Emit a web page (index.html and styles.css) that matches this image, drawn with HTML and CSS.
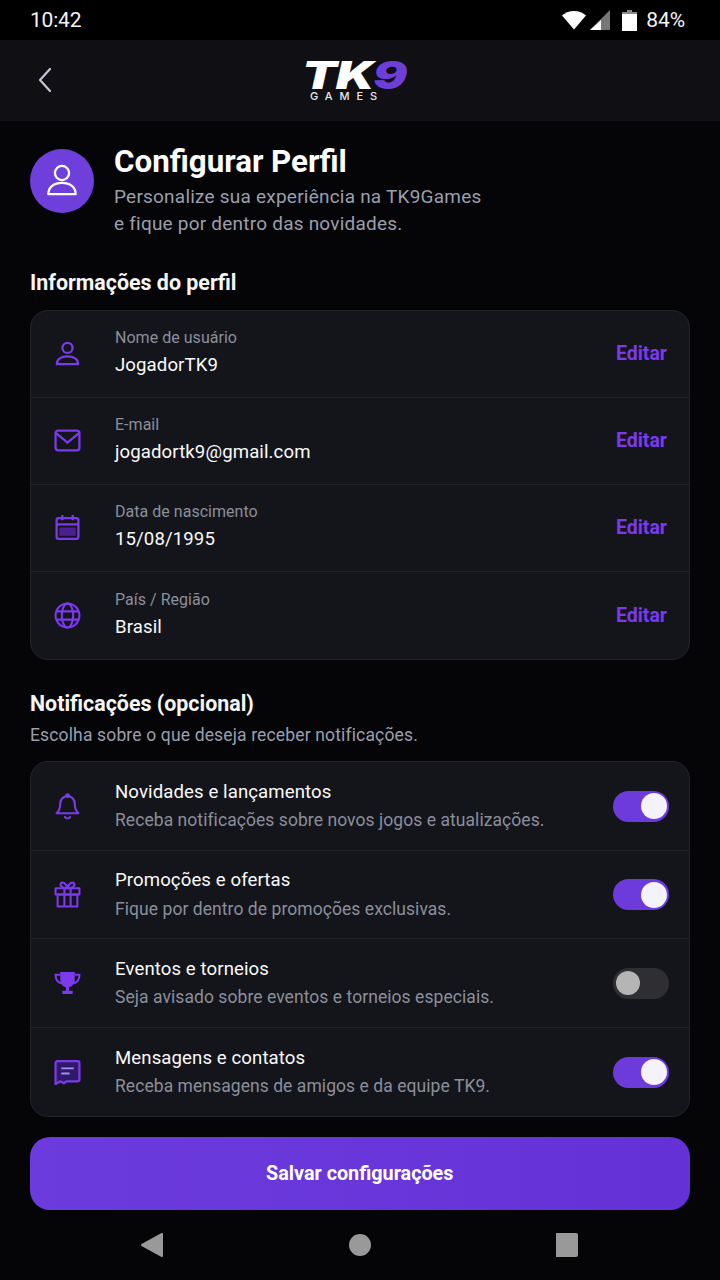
FILE: index.html
```html
<!DOCTYPE html>
<html lang="pt-BR">
<head>
<meta charset="utf-8">
<title>TK9 Games</title>
<link rel="stylesheet" href="styles.css">
</head>
<body>
<div class="phone">
  <div class="status">
    <span class="time">10:42</span>
    <div class="status-right">
      <svg class="s-wifi" width="26" height="20" viewBox="0 0 26 20"><path d="M1 5.500C4 3 8 1 13 1s9 2 12 4.500L13 19.500z" fill="#fff"/></svg>
      <svg class="s-sig" width="21" height="20" viewBox="0 0 21 20"><path d="M20 0v20H0z" fill="#777"/><path d="M11 10v10H0z" fill="#fff"/></svg>
      <svg class="s-bat" width="15" height="21" viewBox="0 0 15 21"><path d="M5 0h5v2h5v19H0V2h5z" fill="#fff"/><path d="M5 0h5v2h5v2H0V2h5z" fill="#888"/></svg>
      <span class="pct">84%</span>
    </div>
  </div>
  <header class="topbar">
    <svg class="back" width="16" height="26" viewBox="0 0 16 26"><path d="M13 2 3 13l10 11" fill="none" stroke="#c4c4d4" stroke-width="2.200" stroke-linecap="round" stroke-linejoin="round"/></svg>
    <div class="logo">
      <div class="logo-main"><span class="logo-tk">TK</span><span class="logo-9">9</span></div>
      <div class="logo-sub">GAMES</div>
    </div>
  </header>
  <main class="content">
    <section class="intro">
      <div class="avatar">
        <svg width="34" height="36" viewBox="0 0 36 38" fill="none" stroke="#fff" stroke-width="2.400"><circle cx="18" cy="10.500" r="7.500"/><path d="M3.500 33c0-7.500 6-12 14.500-12s14.500 4.500 14.500 12z" stroke-linejoin="round"/></svg>
      </div>
      <div>
        <h1 class="title">Configurar Perfil</h1>
        <p class="subtitle">Personalize sua experiência na TK9Games<br>e fique por dentro das novidades.</p>
      </div>
    </section>

    <h2 class="section-title first">Informações do perfil</h2>
    <div class="card">
      <div class="row info-row">
        <svg class="icon" viewBox="0 0 24 24" fill="none" stroke="#7c3aed" stroke-width="2"><circle cx="12" cy="7" r="4.500"/><path d="M2.500 21.500c0-4.500 4-7 9.500-7s9.500 2.500 9.500 7z" stroke-linejoin="round"/></svg>
        <div class="text"><div class="label">Nome de usuário</div><div class="value">JogadorTK9</div></div>
        <span class="edit">Editar</span>
      </div>
      <div class="row info-row">
        <svg class="icon" viewBox="0 0 26 24" fill="none" stroke="#7c3aed" stroke-width="2.200" stroke-linejoin="round"><rect x="1.500" y="2.500" width="23" height="19" rx="2.500"/><path d="m2 5 11 9 11-9"/></svg>
        <div class="text"><div class="label">E-mail</div><div class="value">jogadortk9@gmail.com</div></div>
        <span class="edit">Editar</span>
      </div>
      <div class="row info-row">
        <svg class="icon" viewBox="0 0 24 26" fill="none" stroke="#7c3aed" stroke-width="2.200"><rect x="1.500" y="4" width="21" height="20" rx="2"/><path d="M1.500 10h21M7 1v5M17 1v5"/><rect x="4" y="13" width="16" height="8" fill="#4c1d95" stroke="none"/></svg>
        <div class="text"><div class="label">Data de nascimento</div><div class="value">15/08/1995</div></div>
        <span class="edit">Editar</span>
      </div>
      <div class="row info-row">
        <svg class="icon" viewBox="0 0 26 26" fill="none" stroke="#7c3aed" stroke-width="2"><circle cx="13" cy="13" r="11.500"/><ellipse cx="13" cy="13" rx="5.500" ry="11.500"/><path d="M2.500 9h21M2.500 17h21"/></svg>
        <div class="text"><div class="label">País / Região</div><div class="value">Brasil</div></div>
        <span class="edit">Editar</span>
      </div>
    </div>

    <h2 class="section-title second">Notificações (opcional)</h2>
    <p class="hint">Escolha sobre o que deseja receber notificações.</p>
    <div class="card">
      <div class="row notif-row">
        <svg class="icon" viewBox="0 0 24 26" fill="none" stroke="#7c3aed" stroke-width="2" stroke-linejoin="round"><path d="M12 3c-4.500 0-7 3.500-7 7.500 0 4-1 6.500-3.500 9h21c-2.500-2.500-3.500-5-3.500-9C19 6.500 16.500 3 12 3z"/><circle cx="12" cy="2.500" r="1.300" fill="#7c3aed"/><path d="M9.500 23c1 1.800 4 1.800 5 0" stroke-linecap="round"/></svg>
        <div class="text"><div class="ntitle">Novidades e lançamentos</div><div class="ndesc">Receba notificações sobre novos jogos e atualizações.</div></div>
        <span class="toggle on"><span class="knob"></span></span>
      </div>
      <div class="row notif-row">
        <svg class="icon" viewBox="0 0 26 26" fill="none" stroke="#7c3aed" stroke-width="2" stroke-linejoin="round"><rect x="1.500" y="7" width="23" height="6"/><rect x="3.500" y="13" width="19" height="11.500"/><path d="M10 7v17.500M16 7v17.500M13 7C9 7 5.500 5.500 6.500 2.500 8 0 12 2.500 13 7zM13 7c4 0 7.500-1.500 6.500-4.500C18 0 14 2.500 13 7z"/></svg>
        <div class="text"><div class="ntitle">Promoções e ofertas</div><div class="ndesc">Fique por dentro de promoções exclusivas.</div></div>
        <span class="toggle on"><span class="knob"></span></span>
      </div>
      <div class="row notif-row">
        <svg class="icon" viewBox="0 0 26 24" fill="#7c3aed"><path d="M6 1h14v7c0 4.500-3 7-5.500 7.800V19H18v3H8v-3h3.500v-3.200C9 15 6 12.500 6 8z"/><path d="M6 3.500H1.500C1.500 8 3 11 7.500 12M20 3.500h4.500C24.500 8 23 11 18.500 12" fill="none" stroke="#7c3aed" stroke-width="2"/></svg>
        <div class="text"><div class="ntitle">Eventos e torneios</div><div class="ndesc">Seja avisado sobre eventos e torneios especiais.</div></div>
        <span class="toggle off"><span class="knob"></span></span>
      </div>
      <div class="row notif-row">
        <svg class="icon" viewBox="0 0 26 26" fill="none" stroke="#7c3aed" stroke-width="2.200" stroke-linejoin="round"><path d="M3.500 2h19a2 2 0 0 1 2 2v15.500a2 2 0 0 1-2 2H12l-2.500 2-3-2-5 2.500V4a2 2 0 0 1 2-2z" fill="#2e1a66"/><path d="M7 9h12M7 14h8" stroke="#a78bfa" stroke-width="1.800"/></svg>
        <div class="text"><div class="ntitle">Mensagens e contatos</div><div class="ndesc">Receba mensagens de amigos e da equipe TK9.</div></div>
        <span class="toggle on"><span class="knob"></span></span>
      </div>
    </div>

    <button class="save">Salvar configurações</button>
  </main>
  <nav class="navbar">
    <svg width="24" height="34" viewBox="0 0 24 34"><path d="M22 6v22L2 17z" fill="#999" stroke="#999" stroke-width="2" stroke-linejoin="round"/></svg>
    <svg width="24" height="34" viewBox="0 0 24 34"><ellipse cx="12" cy="17" rx="11" ry="11" fill="#999"/></svg>
    <svg width="24" height="34" viewBox="0 0 24 34"><rect x="-1" y="5" width="23" height="24" rx="2" fill="#999"/></svg>
  </nav>
</div>
</body>
</html>
```
FILE: styles.css
```css
* { box-sizing: border-box; margin: 0; padding: 0; }
html, body { width: 720px; height: 1280px; overflow: hidden; background: #050507; }
body { font-family: Roboto, "Noto Sans", sans-serif; color: #fff; }
.phone { width: 720px; height: 1280px; display: flex; flex-direction: column; }

.status { flex: none; height: 40px; background: #000; display: flex; align-items: center; justify-content: space-between; padding: 0 35px 0 30px; }
.time { font-size: 21px; letter-spacing: -0.2px; color: #f4f4f4; }
.status-right { display: flex; align-items: center; }
.s-wifi { margin-right: 3px; }
.s-sig { margin-right: 11px; }
.s-bat { margin-right: 9px; }
.pct { font-size: 21px; letter-spacing: -0.1px; color: #f4f4f4; }

.topbar { flex: none; height: 81px; background: #101014; display: flex; align-items: center; justify-content: center; position: relative; }
.back { position: absolute; left: 37px; top: 27px; }
.logo { width: 100px; display: flex; flex-direction: column; align-items: flex-start; margin-right: 12px; }
.logo-main { width: 100px; margin-top: 2px; text-align: center; white-space: nowrap; font-family: Inter, Roboto, sans-serif; font-weight: 900; font-style: italic; font-size: 38px; line-height: 29px; letter-spacing: -1px; transform: scaleX(1.34); }
.logo-tk { color: #fff; }
.logo-9 { color: #6d3fd8; }
.logo-sub { font-family: Inter, Roboto, sans-serif; font-size: 11px; font-weight: 500; line-height: 11px; letter-spacing: 6.900px; color: #e8e8e8; margin-top: 1px; margin-left: 6px; }

.content { flex: 1; min-height: 0; padding: 0 30.500px 0 30px; display: flex; flex-direction: column; background: #050507; }
.intro { display: flex; gap: 20px; padding-top: 26px; }
.avatar { width: 64px; height: 64px; border-radius: 50%; background: #6f3fdc; display: flex; align-items: center; justify-content: center; margin-top: 2px; flex: none; }
.title { font-size: 31.300px; font-weight: 700; line-height: 29px; }
.subtitle { font-size: 19px; line-height: 27px; color: #9a9fae; margin-top: 7px; letter-spacing: 0.22px; }

.section-title { font-size: 21.400px; font-weight: 700; line-height: 26px; color: #f6f6f6; }
.section-title.first { margin-top: 33px; }
.section-title.second { margin-top: 31.700px; }
.hint { font-size: 17.500px; line-height: 22px; color: #9a9fae; margin-top: 7px; letter-spacing: 0.15px; }

.card { flex: none; background: #14151a; border: 1px solid #24252b; border-radius: 18px; overflow: hidden; }
.section-title.first + .card { margin-top: 14px; }
.hint + .card { margin-top: 15px; }
.row { display: flex; align-items: center; padding: 0 21.500px 0 23px; border-bottom: 1px solid #212227; }
.row:last-child { border-bottom: 0; }
.info-row { height: 86.900px; }
.notif-row { height: 88.500px; padding-right: 20px; }
.icon { width: 27px; height: 27px; flex: none; }
.text { flex: 1; margin-left: 34px; min-width: 0; }
.info-row .text { padding-bottom: 2px; }
.label { font-size: 16px; line-height: 20px; color: #8b8f9c; letter-spacing: 0.03px; }
.value { font-size: 18.600px; line-height: 24px; color: #fafafa; margin-top: 5px; letter-spacing: 0.1px; }
.edit { font-size: 19.500px; font-weight: 700; color: #7c3aed; }
.ntitle { font-size: 18.600px; line-height: 24px; color: #fafafa; letter-spacing: 0.1px; margin-top: -1px; }
.ndesc { font-size: 17.500px; line-height: 22px; color: #8b8f9c; margin-top: 5.500px; letter-spacing: 0.06px; }

.toggle { width: 56px; height: 31px; border-radius: 16px; display: flex; align-items: center; flex: none; padding: 0 2px; }
.toggle.on { background: #6d3bdc; justify-content: flex-end; }
.toggle.off { background: #2f2f33; justify-content: flex-start; }
.knob { width: 26px; height: 26px; border-radius: 50%; background: #f4f2fa; }
.toggle.off .knob { width: 24px; height: 24px; background: #b5b5b5; margin-left: 1px; }

.save { flex: none; height: 73px; margin-top: 20px; border: 0; border-radius: 20px; background: linear-gradient(90deg, #6c3bdd, #6431d6); color: #fff; font-family: Roboto, sans-serif; font-size: 19.800px; font-weight: 700; width: 100%; }

.navbar { flex: none; height: 70px; background: #050507; display: flex; justify-content: space-between; align-items: center; padding: 0 140px; }
```
